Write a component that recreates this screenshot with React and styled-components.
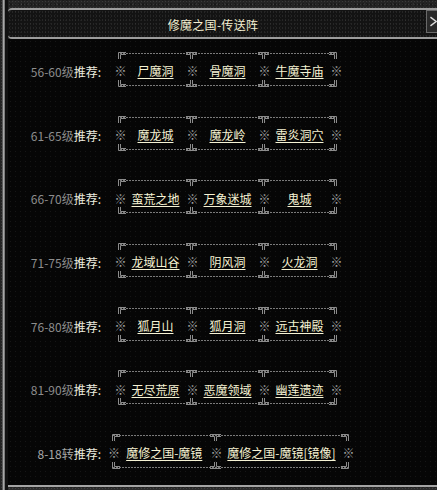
import React from 'react';
import styled, { createGlobalStyle } from 'styled-components';

const FONT = `"Noto Sans CJK SC", "Noto Sans", sans-serif`;

const Global = createGlobalStyle`
  html, body { margin: 0; padding: 0; background: #000; }
  body { font-family: ${FONT}; }
`;

const stone = `
  background-color: #242424;
  background-image:
    radial-gradient(rgba(255,255,255,0.10) 0.7px, transparent 1px),
    radial-gradient(rgba(0,0,0,0.35) 0.8px, transparent 1.2px),
    radial-gradient(rgba(255,255,255,0.06) 0.6px, transparent 1px);
  background-size: 3px 3px, 4px 5px, 7px 6px;
  background-position: 0 0, 1px 2px, 3px 1px;
`;

const Window = styled.div`
  width: 437px;
  height: 490px;
  display: flex;
  overflow: hidden;
  background: #050505;
`;

const LeftRail = styled.div`
  width: 8px;
  flex: none;
  ${stone}
  box-shadow: inset -3px 0 0 #111, inset -4px 0 0 #7c7c7c, inset -5px 0 0 #a8a8a8, inset -6px 0 0 #5a5a5a;
`;

const Main = styled.div`
  flex: 1;
  display: flex;
  flex-direction: column;
  min-width: 0;
`;

const TitleBar = styled.div`
  height: 39px;
  flex: none;
  padding-top: 8px;
  box-sizing: border-box;
  ${stone}
  display: flex;
`;

const TitleInner = styled.div`
  flex: 1;
  display: flex;
  border-top: 2px solid #9c9c9c;
  border-bottom: 2px solid #9c9c9c;
  background-color: #131313;
  background-image:
    radial-gradient(rgba(255,255,255,0.08) 0.7px, transparent 1px),
    radial-gradient(rgba(255,255,255,0.05) 0.6px, transparent 1px);
  background-size: 3px 4px, 5px 3px;
  border-top-left-radius: 4px;
  border-bottom-left-radius: 4px;
`;

const Title = styled.div`
  flex: 1;
  display: flex;
  align-items: center;
  justify-content: center;
  padding-right: 8px;
  padding-top: 1px;
  font-size: 12px;
  color: #f4f0d2;
  letter-spacing: 0.3px;
`;

const CloseBox = styled.div`
  width: 11px;
  height: 23px;
  align-self: flex-start;
  box-sizing: border-box;
  border: 1px solid #6a6a6a;
  border-right: none;
  background: #2a2a2a;
  display: flex;
  align-items: center;
  svg { display: block; margin-left: 3px; }
`;

const Content = styled.div`
  flex: 1;
  display: flex;
  flex-direction: column;
  background-color: #060606;
  background-image: radial-gradient(#161616 0.6px, transparent 0.9px);
  background-size: 5px 5px;
`;

const BottomBar = styled.div`
  height: 17px;
  flex: none;
  ${stone}
  background-color: #2c2c2c;
  border-top: 2px solid #a4a4a4;
  box-sizing: border-box;
`;

const Row = styled.div`
  height: 63.7px;
  flex: none;
  display: flex;
  align-items: center;
`;

const Label = styled.div`
  width: 100px;
  flex: none;
  box-sizing: border-box;
  padding-right: 7px;
  text-align: right;
  white-space: nowrap;
  font-size: 12px;
  padding-top: 1px;
`;

const Level = styled.span`
  color: ${(p) => p.$color || '#8d8d8d'};
`;

const Rec = styled.span`
  color: #ececdf;
`;

const Frame = styled.div`
  position: relative;
  display: flex;
  height: 35px;
  margin-left: ${(p) => p.$offset}px;
  margin-bottom: 3px;

  &::before, &::after {
    content: '';
    position: absolute;
    left: 5px;
    right: 5px;
    height: 1px;
    background: repeating-linear-gradient(90deg, #7a7a7a 0 2px, transparent 2px 3px);
  }
  &::before { top: 1px; }
  &::after { bottom: 1px; }
`;

const Mark = styled.div`
  position: relative;
  width: 10px;
  flex: none;
  display: flex;
  align-items: center;
  justify-content: center;
  padding-top: 3px;
  font-size: 12px;
  color: #a2a2a2;
  z-index: 1;
  span { display: block; width: 10px; text-align: center; overflow: visible; }
`;

const Orn = styled.svg`
  position: absolute;
  ${(p) => (p.$bottom ? 'bottom: 0;' : 'top: 0;')}
  left: ${(p) => p.$left}px;
  display: block;
`;

const Slot = styled.div`
  width: ${(p) => p.$w}px;
  flex: none;
  display: flex;
  align-items: center;
  justify-content: center;
  padding-top: 3px;
`;

const Link = styled.a`
  color: #f6f3d4;
  font-size: 12px;
  white-space: nowrap;
  text-decoration: underline;
  text-underline-offset: 2px;
  text-decoration-thickness: 1px;
  cursor: pointer;
`;

const STROKE = '#8c8c8c';

function Ornament({ kind }) {
  if (kind === 'left') {
    return (
      <>
        <Orn $left={3.5} width="8" height="7" viewBox="0 0 8 7">
          <path d="M0.5 7V0.5H8M2.5 7V2.5H8" fill="none" stroke={STROKE} />
        </Orn>
        <Orn $bottom $left={3.5} width="8" height="7" viewBox="0 0 8 7">
          <path d="M0.5 0V6.5H8M2.5 0V4.5H8" fill="none" stroke={STROKE} />
        </Orn>
      </>
    );
  }
  if (kind === 'right') {
    return (
      <>
        <Orn $left={-1.5} width="8" height="7" viewBox="0 0 8 7">
          <path d="M7.5 7V0.5H0M5.5 7V2.5H0" fill="none" stroke={STROKE} />
        </Orn>
        <Orn $bottom $left={-1.5} width="8" height="7" viewBox="0 0 8 7">
          <path d="M7.5 0V6.5H0M5.5 0V4.5H0" fill="none" stroke={STROKE} />
        </Orn>
      </>
    );
  }
  return (
    <>
      <Orn $left={-0.5} width="11" height="7" viewBox="0 0 11 7">
        <path d="M0 0.5H11M0 2.5H4.5V7M11 2.5H6.5V7" fill="none" stroke={STROKE} />
      </Orn>
      <Orn $bottom $left={-0.5} width="11" height="7" viewBox="0 0 11 7">
        <path d="M0 6.5H11M0 4.5H4.5V0M11 4.5H6.5V0" fill="none" stroke={STROKE} />
      </Orn>
    </>
  );
}

const rows = [
  { level: '56-60级', places: ['尸魔洞', '骨魔洞', '牛魔寺庙'] },
  { level: '61-65级', places: ['魔龙城', '魔龙岭', '雷炎洞穴'] },
  { level: '66-70级', places: ['蛮荒之地', '万象迷城', '鬼城'] },
  { level: '71-75级', places: ['龙域山谷', '阴风洞', '火龙洞'] },
  { level: '76-80级', places: ['狐月山', '狐月洞', '远古神殿'] },
  { level: '81-90级', places: ['无尽荒原', '恶魔领域', '幽莲遗迹'] },
];

function PlaceFrame({ places, widths, offset }) {
  const items = [];
  places.forEach((p, i) => {
    items.push(
      <Mark key={'m' + i}>
        <span>※</span>
        <Ornament kind={i === 0 ? 'left' : 'mid'} />
      </Mark>
    );
    items.push(
      <Slot key={'s' + i} $w={widths[i]}>
        <Link>{p}</Link>
      </Slot>
    );
  });
  items.push(
    <Mark key="end">
      <span>※</span>
      <Ornament kind="right" />
    </Mark>
  );
  return <Frame $offset={offset}>{items}</Frame>;
}

export default function App() {
  return (
    <>
      <Global />
      <Window>
        <LeftRail />
        <Main>
          <TitleBar>
            <TitleInner>
              <Title>修魔之国-传送阵</Title>
              <CloseBox>
                <svg width="8" height="11" viewBox="0 0 8 11">
                  <path d="M0.5 0.5L7 5.5L0.5 10.5" fill="none" stroke="#dcdcdc" strokeWidth="1.6" />
                </svg>
              </CloseBox>
            </TitleInner>
          </TitleBar>
          <Content>
            {rows.map((r) => (
              <Row key={r.level}>
                <Label>
                  <Level>{r.level}</Level>
                  <Rec>推荐:</Rec>
                </Label>
                <PlaceFrame places={r.places} widths={[62, 62, 62]} offset={6.5} />
              </Row>
            ))}
            <Row>
              <Label>
                <Level $color="#a8a8a8">8-18转</Level>
                <Rec>推荐:</Rec>
              </Label>
              <PlaceFrame
                places={['魔修之国-魔镜', '魔修之国-魔镜[镜像]']}
                widths={[92.5, 122]}
                offset={0}
              />
            </Row>
          </Content>
          <BottomBar />
        </Main>
      </Window>
    </>
  );
}
